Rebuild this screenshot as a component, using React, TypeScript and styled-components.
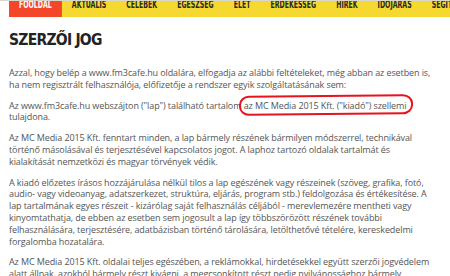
import React from "react";
import styled, { createGlobalStyle } from "styled-components";

const GlobalStyle = createGlobalStyle`
    html, body {
        margin: 0;
        padding: 0;
        background: #ffffff;
    }
    body {
        font-family: "Open Sans", "Liberation Sans", sans-serif;
    }
`;

const Page = styled.div`
    width: 450px;
    overflow: hidden;
`;

const Header = styled.header`
    border-top: 1px solid #d9d6cc;
    padding-left: 9px;
`;

const Nav = styled.nav`
    height: 16px;
    overflow: hidden;
    background: #f6d930;
`;

// the menu font is a tall narrow one, so the row is squeezed sideways
const NavRow = styled.div`
    display: flex;
    width: max-content;
    height: 100%;
    transform: scaleX(0.63);
    transform-origin: 0 0;
`;

const NavItem = styled.a<{ $active?: boolean }>`
    flex: none;
    padding: 0 15.9px;
    line-height: 7px;
    font-family: "Liberation Sans Narrow", "DejaVu Sans Condensed", "Liberation Sans", sans-serif;
    font-stretch: condensed;
    font-size: 11px;
    font-weight: 700;
    text-transform: uppercase;
    white-space: nowrap;
    color: ${(p) => (p.$active ? "#ffffff" : "#2b2a22")};
    background: ${(p) => (p.$active ? "#f4472a" : "transparent")};
`;

const Content = styled.main`
    padding: 0 16px 0 9px;
`;

const Title = styled.h1`
    margin: 16px 0 20px;
    font-family: "Liberation Sans Narrow", "DejaVu Sans Condensed", "Liberation Sans", sans-serif;
    font-stretch: condensed;
    font-size: 15.5px;
    line-height: 14px;
    font-weight: 700;
    letter-spacing: -0.75px;
    color: #232323;
`;

const Paragraph = styled.p`
    margin: 0 0 9px;
    font-size: 9px;
    line-height: 11.8px;
    letter-spacing: -0.1px;
    color: #555555;
`;

const Circled = styled.span`
    position: relative;

    &::after {
        content: "";
        position: absolute;
        left: -5px;
        right: -6px;
        top: -4px;
        bottom: -3px;
        border: 2.5px solid #e5141f;
        border-radius: 10px / 9px;
        transform: rotate(-0.6deg);
        pointer-events: none;
    }
`;

const menu = ["Főoldal", "Aktuális", "Celebek", "Egészség", "Élet", "Érdekesség", "Hírek", "Időjárás", "Segíts"];

const App = () => {
    return (
        <Page>
            <GlobalStyle />
            <Header>
                <Nav>
                    <NavRow>
                        {menu.map((item, i) => (
                            <NavItem key={item} $active={i === 0}>{item}</NavItem>
                        ))}
                    </NavRow>
                </Nav>
            </Header>
            <Content>
                <Title>SZERZŐI JOG</Title>
                <Paragraph>
                    Azzal, hogy belép a www.fm3cafe.hu oldalára, elfogadja az alábbi feltételeket, még abban az esetben is, ha nem regisztrált felhasználója, előfizetője a rendszer egyik szolgáltatásának sem:
                </Paragraph>
                <Paragraph>
                    Az www.fm3cafe.hu webszájton ("lap") található tartalom <Circled>az MC Media 2015 Kft. ("kiadó") szellemi</Circled> tulajdona.
                </Paragraph>
                <Paragraph>
                    Az MC Media 2015 Kft. fenntart minden, a lap bármely részének bármilyen módszerrel, technikával történő másolásával és terjesztésével kapcsolatos jogot. A laphoz tartozó oldalak tartalmát és kialakítását nemzetközi és magyar törvények védik.
                </Paragraph>
                <Paragraph>
                    A kiadó előzetes írásos hozzájárulása nélkül tilos a lap egészének vagy részeinek (szöveg, grafika, fotó, audio- vagy videoanyag, adatszerkezet, struktúra, eljárás, program stb.) feldolgozása és értékesítése. A lap tartalmának egyes részeit - kizárólag saját felhasználás céljából - merevlemezére mentheti vagy kinyomtathatja, de ebben az esetben sem jogosult a lap így többszörözött részének további felhasználására, terjesztésére, adatbázisban történő tárolására, letölthetővé tételére, kereskedelmi forgalomba hozatalára.
                </Paragraph>
                <Paragraph>
                    Az MC Media 2015 Kft. oldalai teljes egészében, a reklámokkal, hirdetésekkel együtt szerzői jogvédelem alatt állnak, azokból bármely részt kivágni, a megcsonkított részt pedig nyilvánossághoz bármely formában, eszközzel közvetíteni tilos.
                </Paragraph>
            </Content>
        </Page>
    );
};

export default App;
